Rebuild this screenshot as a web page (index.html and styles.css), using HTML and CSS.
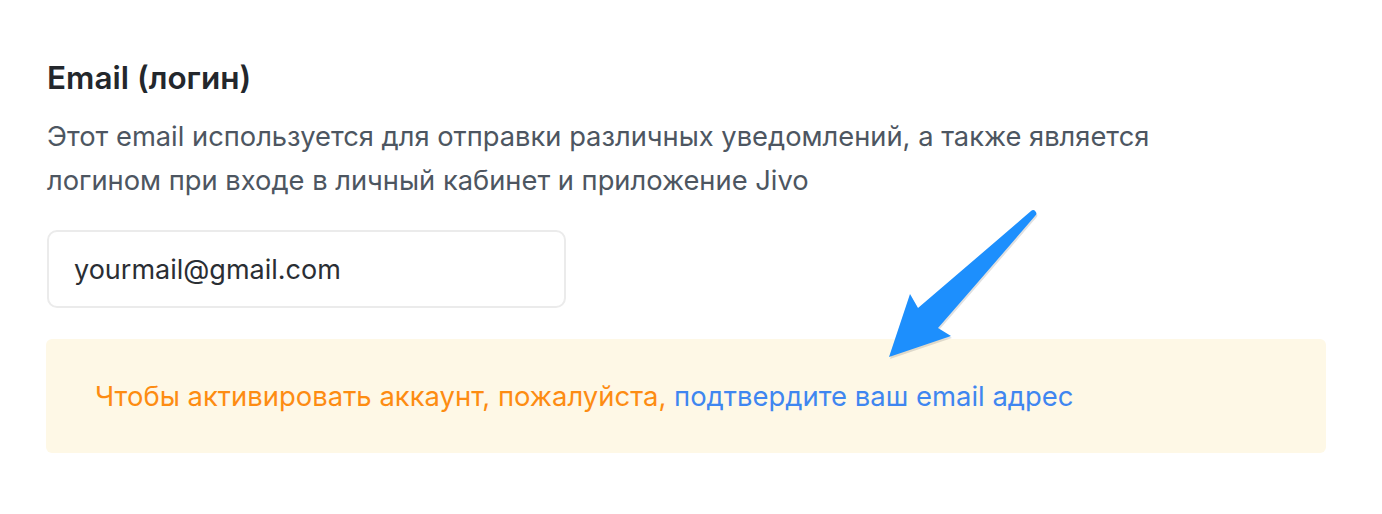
FILE: index.html
```html
<!DOCTYPE html>
<html lang="ru">
<head>
<meta charset="utf-8">
<link rel="stylesheet" href="styles.css">
</head>
<body>
<div class="page">
  <section class="field">
    <h2 class="field-title">Email (логин)</h2>
    <p class="field-desc">Этот email используется для отправки различных уведомлений, а также является<br>логином при входе в личный кабинет и приложение Jivo</p>
    <div class="input">yourmail@gmail.com</div>
    <div class="alert"><span class="alert-text">Чтобы активировать аккаунт, пожалуйста, </span><a class="alert-link" href="#">подтвердите ваш email адрес</a></div>
  </section>
  <svg class="arrow" width="180" height="170" viewBox="0 0 180 170">
    <path class="arrow-shadow" d="M20,159 L41,96 L49,110 Q110,57 162,13 A3,3 0 0 1 166,18 Q111,82 69,130 L82,138 Z"/>
    <path class="arrow-body" d="M19,157 L40,94 L48,108 Q110,55 161,11 A3,3 0 0 1 165,16 Q110,80 68,128 L81,136 Z"/>
  </svg>
</div>
</body>
</html>
```
FILE: styles.css
```css
html, body {
  margin: 0;
  padding: 0;
  background: #ffffff;
}
body {
  font-family: Inter, "Noto Sans", "Liberation Sans", sans-serif;
}
.page {
  position: relative;
  width: 1382px;
  height: 514px;
}
.field {
  padding: 58px 0 0 46px;
  width: 1280px;
}
.field-title {
  margin: 0 0 17px 1px;
  font-size: 31.5px;
  line-height: 40px;
  font-weight: 600;
  color: #23272c;
}
.field-desc {
  margin: 0 0 27px 1px;
  font-size: 27.3px;
  line-height: 44px;
  color: #4d5661;
}
.input {
  box-sizing: border-box;
  margin-left: 1px;
  width: 519px;
  height: 78px;
  border: 2px solid #ebebeb;
  border-radius: 10px;
  padding-left: 25px;
  display: flex;
  align-items: center;
  font-size: 27px;
  color: #2a2e34;
}
.alert {
  margin-top: 31px;
  height: 114px;
  box-sizing: border-box;
  background: #fef8e6;
  border-radius: 6px;
  padding-left: 49px;
  display: flex;
  align-items: center;
  font-size: 27.45px;
}
.alert-text {
  white-space: pre;
  color: #fd8c12;
}
.alert-link {
  color: #3f86f0;
  text-decoration: none;
}
.arrow {
  position: absolute;
  left: 870px;
  top: 200px;
}
.arrow-shadow {
  fill: rgba(0, 0, 0, 0.12);
}
.arrow-body {
  fill: #1d8ffd;
}
```
